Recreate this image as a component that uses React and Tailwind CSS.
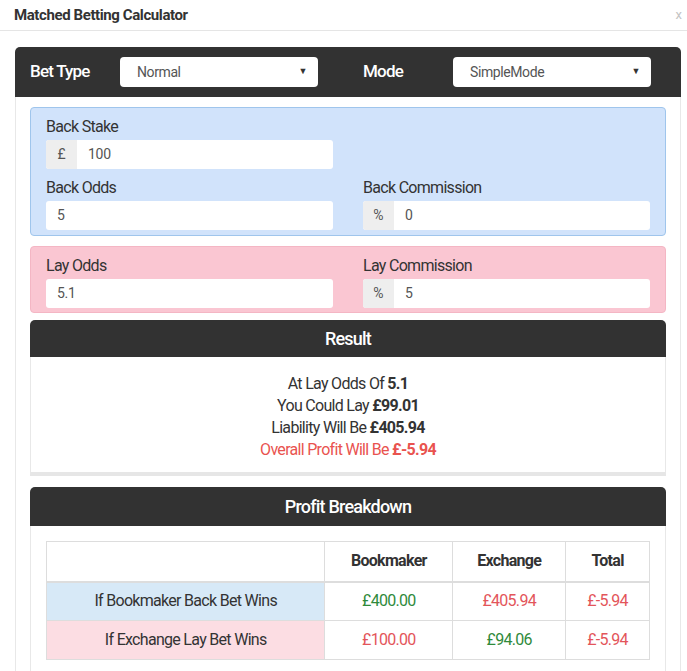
import React from "react";

const font = { fontFamily: "Roboto, 'Noto Sans', sans-serif" };

const Select = ({ value }) => (
  <div className="w-[198px] h-[30px] bg-white rounded-[4px] flex items-center justify-between pl-[17px] pr-[11px] text-[14px] text-[#555] tracking-[-0.4px]">
    <span>{value}</span>
    <span className="text-[9px] text-[#333]">▼</span>
  </div>
);

const Field = ({ label, value, addon }) => (
  <div className="w-[287px]">
    <div className="h-[22px] leading-[22px] text-[16px] text-[#333] mb-[2px] tracking-[-0.7px]">{label}</div>
    <div className="h-[29px] flex bg-white rounded-[3px] overflow-hidden text-[14px] text-[#555]">
      {addon && (
        <div className="w-[31px] bg-[#eeeeee] flex items-center justify-center">{addon}</div>
      )}
      <div className="flex items-center pl-[11px] tracking-[-0.3px]">{value}</div>
    </div>
  </div>
);

const rows = [
  { label: "If Bookmaker Back Bet Wins", bg: "bg-[#d7e9f7]", bm: ["£400.00", "text-[#2f8a3b]"], ex: ["£405.94", "text-[#e3555a]"], total: "£-5.94" },
  { label: "If Exchange Lay Bet Wins", bg: "bg-[#fcdde3]", bm: ["£100.00", "text-[#e3555a]"], ex: ["£94.06", "text-[#2f8a3b]"], total: "£-5.94" },
];

export default function App() {
  return (
    <div className="w-[687px] h-[671px] bg-white overflow-hidden" style={font}>
      <div className="h-[31px] border-b border-[#e5e5e5] flex items-center justify-between pl-[14px] pr-[5px]">
        <span className="text-[15px] font-bold text-[#333] tracking-[-0.4px]">Matched Betting Calculator</span>
        <span className="text-[13px] text-[#c4c4c4]">x</span>
      </div>

      <div className="pl-[15px] pr-[6px] pt-[16px]">
        <div className="w-[666px]">
          <div className="h-[50px] bg-[#323232] rounded-t-[5px] flex items-center pl-[15px]">
            <span className="w-[90px] text-[17px] text-white font-medium tracking-[-0.8px]">Bet Type</span>
            <Select value="Normal" />
            <span className="w-[90px] ml-[45px] text-[17px] text-white font-medium tracking-[-0.8px]">Mode</span>
            <Select value="SimpleMode" />
          </div>

          <div className="border-x border-[#e8e8e8] px-[14px] pt-[10px]">
            <div className="bg-[#d1e3fb] border border-[#9fc5ec] rounded-[4px] px-[15px] pt-[8px] pb-[5px]">
              <Field label="Back Stake" value="100" addon="£" />
              <div className="flex gap-[30px] mt-[8px]">
                <Field label="Back Odds" value="5" />
                <Field label="Back Commission" value="0" addon="%" />
              </div>
            </div>

            <div className="mt-[10px] bg-[#fac6d2] border border-[#f4b6c4] rounded-[4px] px-[15px] pt-[8px] pb-[4px] flex gap-[30px]">
              <Field label="Lay Odds" value="5.1" />
              <Field label="Lay Commission" value="5" addon="%" />
            </div>

            <div className="mt-[7px]">
              <div className="h-[37px] bg-[#323232] rounded-t-[5px] flex items-center justify-center text-[18px] text-white font-medium tracking-[-0.8px]">
                Result
              </div>
              <div className="border-x border-[#e8e8e8] border-b-4 border-b-[#e6e6e6] pt-[16px] pb-[11px] text-center text-[16px] leading-[22px] text-[#333] tracking-[-0.7px]">
                <div>At Lay Odds Of <b>5.1</b></div>
                <div>You Could Lay <b>£99.01</b></div>
                <div>Liability Will Be <b>£405.94</b></div>
                <div className="text-[#e9534f]">Overall Profit Will Be <b>£-5.94</b></div>
              </div>
            </div>

            <div className="mt-[11px]">
              <div className="h-[39px] bg-[#323232] rounded-t-[5px] flex items-center justify-center text-[18px] text-white font-medium tracking-[-0.8px]">
                Profit Breakdown
              </div>
              <div className="border-x border-[#e8e8e8] px-[15px] pt-[15px] pb-[20px]">
                <table className="w-[604px] border-collapse text-[16px] text-center tracking-[-0.7px]">
                  <thead>
                    <tr className="h-[40px]">
                      <th className="w-[279px] border border-[#dddddd] border-b-2"></th>
                      <th className="w-[128px] border border-[#dddddd] border-b-2 font-bold text-[#333]">Bookmaker</th>
                      <th className="w-[113px] border border-[#dddddd] border-b-2 font-bold text-[#333]">Exchange</th>
                      <th className="w-[84px] border border-[#dddddd] border-b-2 font-bold text-[#333]">Total</th>
                    </tr>
                  </thead>
                  <tbody>
                    {rows.map((r) => (
                      <tr key={r.label} className="h-[39px]">
                        <td className={`border border-[#dddddd] text-[#333] ${r.bg}`}>{r.label}</td>
                        <td className={`border border-[#dddddd] ${r.bm[1]}`}>{r.bm[0]}</td>
                        <td className={`border border-[#dddddd] ${r.ex[1]}`}>{r.ex[0]}</td>
                        <td className="border border-[#dddddd] text-[#e3555a]">{r.total}</td>
                      </tr>
                    ))}
                  </tbody>
                </table>
              </div>
            </div>
          </div>
        </div>
      </div>
    </div>
  );
}
